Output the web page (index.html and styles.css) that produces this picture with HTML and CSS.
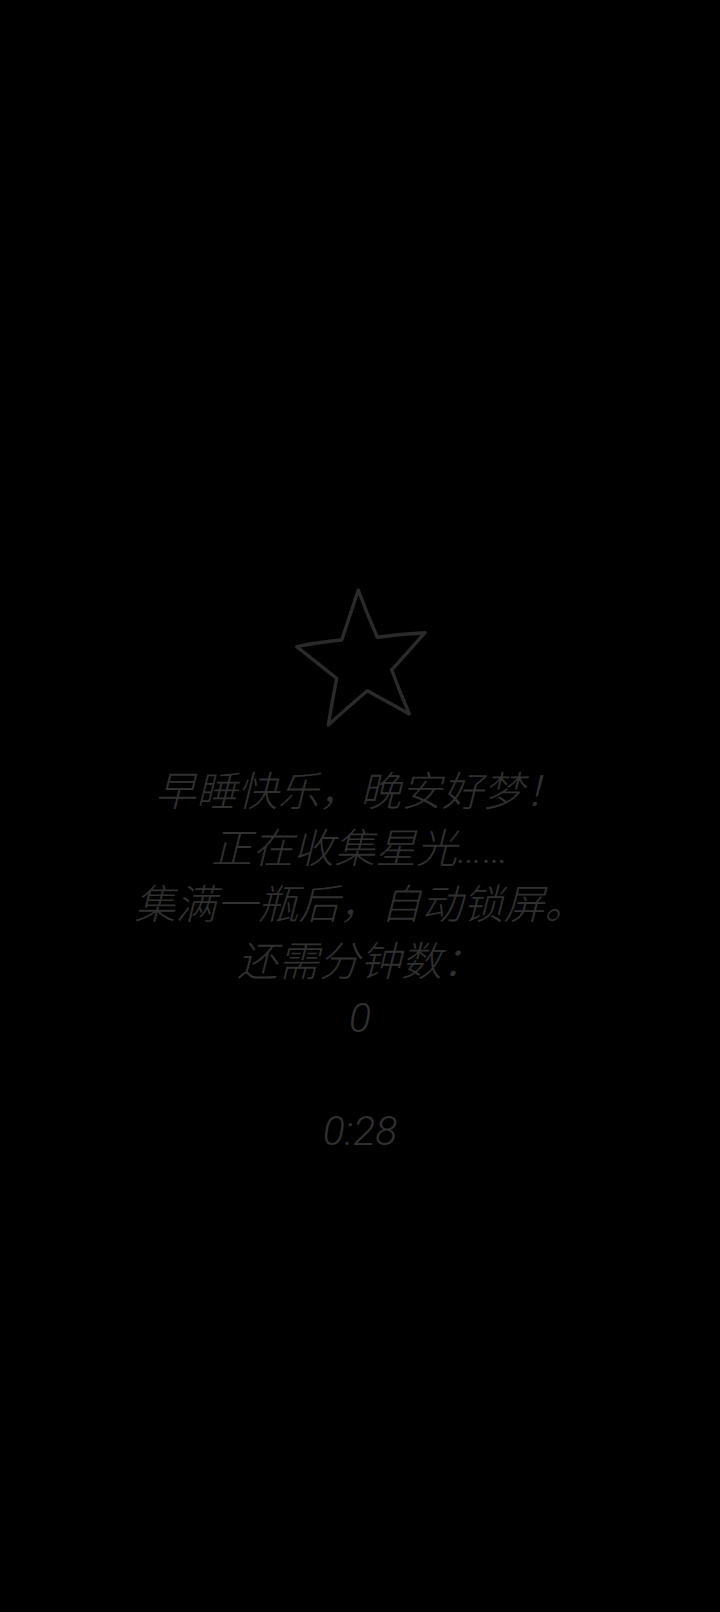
FILE: index.html
```html
<!DOCTYPE html>
<html lang="zh-CN">
<head>
<meta charset="utf-8">
<link rel="stylesheet" href="styles.css">
</head>
<body>
<main class="screen">
  <svg class="star" width="140" height="145" viewBox="290 585 140 145" aria-hidden="true">
    <path d="M358.3 590 Q367 614 377.3 637.3 Q400 634 425 632.7 Q408 652 391.7 670 Q400 692 409.3 714 Q388 702 367.3 690.7 Q348 707 328.3 725 Q332 702 336.7 678.3 Q316 662 296.7 646.7 Q318 642 341.7 640 Q350 615 358.3 590 Z" fill="none" stroke="#2a2a2a" stroke-width="3.4" stroke-linejoin="round"/>
  </svg>
  <div class="msg">
    <p class="line">早睡快乐，晚安好梦！</p>
    <p class="line">正在收集星光……</p>
    <p class="line">集满一瓶后，自动锁屏。</p>
    <p class="line">还需分钟数：</p>
    <p class="line">0</p>
    <p class="line blank">&nbsp;</p>
    <p class="line">0:28</p>
  </div>
</main>
</body>
</html>
```

FILE: styles.css
```css
html, body {
  margin: 0;
  padding: 0;
  background: #000;
}
.screen {
  width: 720px;
  height: 1612px;
  display: flex;
  flex-direction: column;
  align-items: center;
  padding-top: 585px;
  box-sizing: border-box;
}
.star {
  display: block;
}
.msg {
  margin-top: 34px;
  text-align: center;
  font-family: Roboto, "Noto Sans CJK SC", sans-serif;
  font-style: italic;
  font-weight: 300;
  font-size: 41px;
  line-height: 56.5px;
  color: #303030;
}
.line {
  margin: 0;
  white-space: nowrap;
}
```
